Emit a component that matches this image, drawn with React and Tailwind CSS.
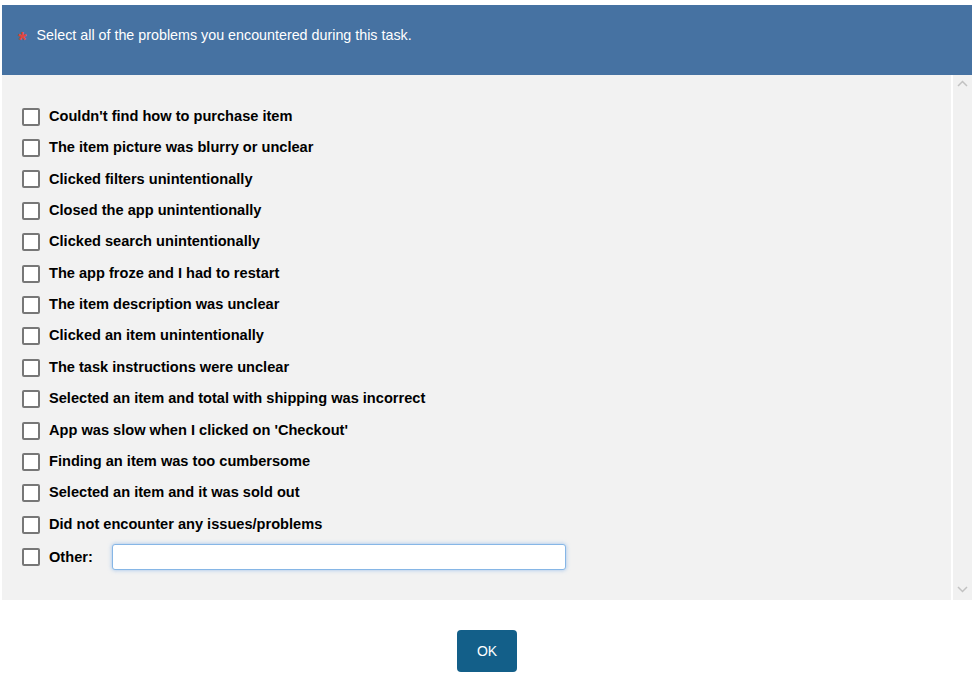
import React, { useState } from "react";

const problems = [
  "Couldn't find how to purchase item",
  "The item picture was blurry or unclear",
  "Clicked filters unintentionally",
  "Closed the app unintentionally",
  "Clicked search unintentionally",
  "The app froze and I had to restart",
  "The item description was unclear",
  "Clicked an item unintentionally",
  "The task instructions were unclear",
  "Selected an item and total with shipping was incorrect",
  "App was slow when I clicked on 'Checkout'",
  "Finding an item was too cumbersome",
  "Selected an item and it was sold out",
  "Did not encounter any issues/problems",
];

const Box = ({ checked, onClick }) => (
  <button
    onClick={onClick}
    className="w-[18px] h-[18px] shrink-0 border-2 border-[#777] rounded-[2px] bg-white flex items-center justify-center text-[12px] leading-none"
  >
    {checked ? "✓" : ""}
  </button>
);

const App = () => {
  const [checked, setChecked] = useState({});
  const [other, setOther] = useState("");
  const toggle = (k) => setChecked((c) => ({ ...c, [k]: !c[k] }));

  return (
    <div className="w-[978px] h-[677px] bg-white pt-[5px] pl-[2px] font-['Liberation_Sans',Arial,sans-serif] overflow-hidden">
      {/* question header */}
      <div className="w-[970px] h-[70px] bg-[#4672a2] flex items-start pt-[22px] pl-[16px]">
        <span className="text-[#e0473f] text-[22px] font-bold leading-[16px] mr-[10px] mt-[5px]">*</span>
        <span className="text-white text-[14.3px] leading-[16px]">
          Select all of the problems you encountered during this task.
        </span>
      </div>

      {/* options panel with scrollbar */}
      <div className="w-[970px] h-[525px] flex bg-[#f2f2f2]">
        <div className="flex-1 pt-[26px] pl-[20px]">
          <ul className="flex flex-col">
            {problems.map((p, i) => (
              <li key={i} className="h-[31.4px] flex items-center gap-[9px]">
                <Box checked={checked[i]} onClick={() => toggle(i)} />
                <span className="text-[14.6px] font-bold text-black">{p}</span>
              </li>
            ))}
            <li className="h-[34px] flex items-center">
              <Box checked={checked.other} onClick={() => toggle("other")} />
              <span className="text-[14.6px] font-bold text-black ml-[9px] w-[63px]">Other:</span>
              <input
                value={other}
                onChange={(e) => setOther(e.target.value)}
                className="w-[454px] h-[26px] bg-white border border-[#86b6e6] rounded-[3px] shadow-[0_0_4px_rgba(100,160,230,0.6)] px-[10px] text-[14px] outline-none"
              />
            </li>
          </ul>
        </div>
        <div className="w-[21px] border-l-2 border-white bg-[#f1f1f1] flex flex-col justify-between items-center py-[4px]">
          <svg width="11" height="7" viewBox="0 0 11 7" className="mt-[1px]">
            <path d="M1 6 L5.5 1.5 L10 6" stroke="#c2c2c2" strokeWidth="1.5" fill="none" />
          </svg>
          <svg width="11" height="7" viewBox="0 0 11 7" className="mb-[3px]">
            <path d="M1 1 L5.5 5.5 L10 1" stroke="#c2c2c2" strokeWidth="1.5" fill="none" />
          </svg>
        </div>
      </div>

      {/* footer */}
      <div className="w-[970px] flex justify-center pt-[30px]">
        <button className="w-[60px] h-[42px] bg-[#135f89] text-white text-[14px] rounded-[4px]">OK</button>
      </div>
    </div>
  );
};

export default App;
